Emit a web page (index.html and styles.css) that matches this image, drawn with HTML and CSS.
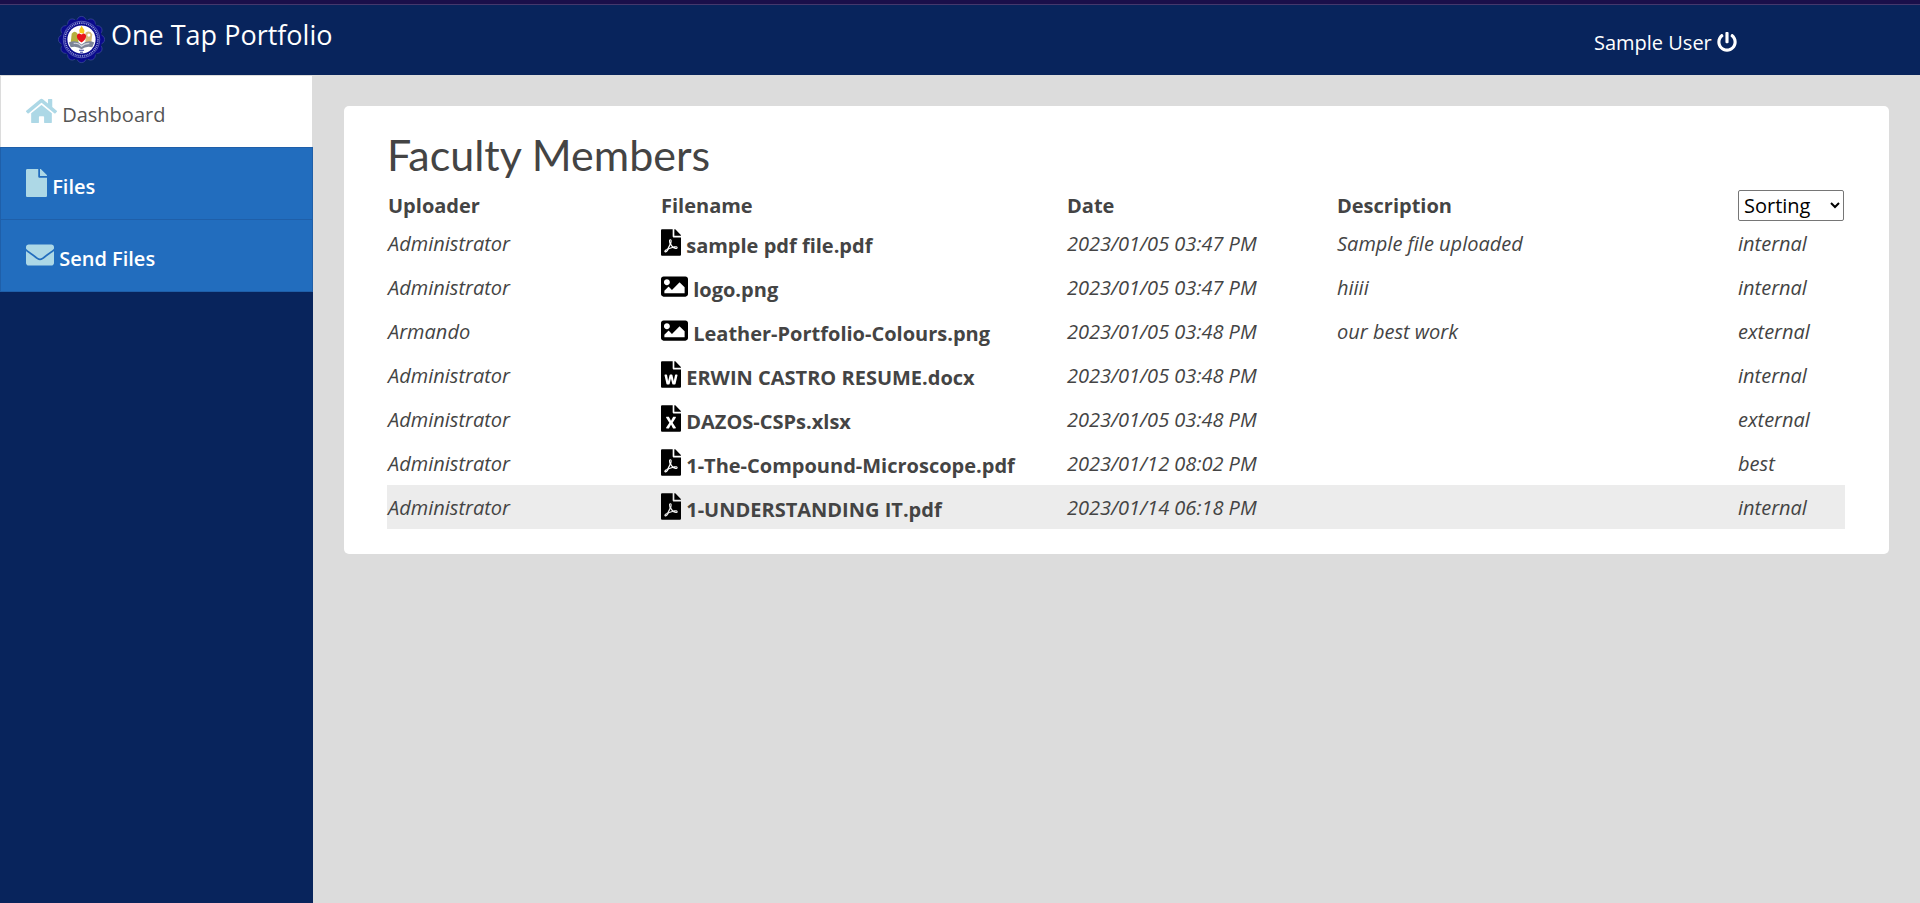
FILE: index.html
```html
<!DOCTYPE html>
<html lang="en">
<head>
<meta charset="utf-8">
<title>One Tap Portfolio</title>
<link rel="stylesheet" href="styles.css">
</head>
<body>
<svg class="sprite" aria-hidden="true">
  <symbol id="pdf" viewBox="0 0 384 512"><path d="M181.9 256.1c-5-16-4.9-46.9-2-46.9 8.4 0 7.6 36.9 2 46.9zm-1.7 47.2c-7.7 20.2-17.3 43.3-28.4 62.7 18.3-7 39-17.2 62.9-21.9-12.7-9.6-24.9-23.4-34.5-40.8zM86.1 428.1c0 .8 13.2-5.4 34.9-40.2-6.7 6.3-29.1 24.5-34.9 40.2zM248 160h136v328c0 13.3-10.7 24-24 24H24c-13.3 0-24-10.7-24-24V24C0 10.7 10.7 0 24 0h200v136c0 13.2 10.8 24 24 24zm-8 171.8c-20-12.2-33.3-29-42.7-53.8 4.5-18.5 11.6-46.6 6.2-64.2-4.7-29.4-42.4-26.5-47.8-6.8-5 18.3-.4 44.1 8.1 77-11.6 27.6-28.7 64.6-40.8 85.8-.1 0-.1.1-.2.1-27.1 13.9-73.6 44.5-54.5 68 5.6 6.9 16 10 21.5 10 17.9 0 35.7-18 61.1-61.8 25.8-8.5 54.1-19.1 79-23.2 21.7 11.8 47.1 19.5 64 19.5 29.2 0 31.2-32 19.7-43.4-13.9-13.6-54.3-9.7-73.6-7.2zM377 105L279 7c-4.5-4.5-10.6-7-17-7h-6v128h128v-6.1c0-6.3-2.5-12.4-7-16.9zm-74.1 255.3c4.1-2.7-2.5-11.9-42.8-9 37.1 15.8 42.8 9 42.8 9z"/></symbol>
  <symbol id="word" viewBox="0 0 384 512"><path d="M224 136V0H24C10.7 0 0 10.7 0 24v464c0 13.3 10.7 24 24 24h336c13.3 0 24-10.7 24-24V160H248c-13.2 0-24-10.8-24-24zm57.1 120H305c7.7 0 13.4 7.1 11.7 14.7l-38 168c-1.2 5.5-6.1 9.3-11.7 9.3h-38c-5.5 0-10.3-3.8-11.6-9.1-25.8-103.5-20.8-81.2-25.6-110.5h-.5c-1.1 14.3-2.4 17.4-25.6 110.5-1.3 5.3-6.1 9.1-11.6 9.1H117c-5.6 0-10.5-3.9-11.7-9.4l-37.8-168c-1.7-7.5 4-14.6 11.7-14.6h24.5c5.7 0 10.7 4 11.8 9.7 15.6 78 20.1 109.5 21 122.2 1.6-10.2 7.3-32.7 29.4-122.7 1.3-5.4 6.1-9.1 11.7-9.1h29.1c5.6 0 10.4 3.8 11.7 9.2 24 100.4 28.8 124 29.6 129.4-.2-11.2-2.6-17.8 21.6-129.2 1-5.6 5.9-9.5 11.5-9.5zM384 121.9v6.1H256V0h6.1c6.4 0 12.5 2.5 17 7l97.9 98c4.5 4.5 7 10.6 7 16.9z"/></symbol>
  <symbol id="excel" viewBox="0 0 384 512"><path d="M224 136V0H24C10.7 0 0 10.7 0 24v464c0 13.3 10.7 24 24 24h336c13.3 0 24-10.7 24-24V160H248c-13.2 0-24-10.8-24-24zm60.1 106.5L224 336l60.1 93.5c5.1 8-.6 18.5-10.1 18.5h-34.9c-4.4 0-8.5-2.4-10.6-6.3C208.9 405.5 192 373 192 373c-6.4 14.8-10 20-36.6 68.8-2.1 3.9-6.1 6.3-10.5 6.3H110c-9.5 0-15.2-10.5-10.1-18.5l60.3-93.5-60.3-93.5c-5.2-8 .6-18.5 10.1-18.5h34.8c4.4 0 8.5 2.4 10.6 6.3 26.1 48.8 20 33.6 36.6 68.5 0 0 6.1-11.7 36.6-68.5 2.1-3.9 6.2-6.3 10.6-6.3H274c9.5-.1 15.2 10.4 10.1 18.4zM384 121.9v6.1H256V0h6.1c6.4 0 12.5 2.5 17 7l97.9 98c4.5 4.5 7 10.6 7 16.9z"/></symbol>
  <symbol id="image" viewBox="0 0 512 512"><path d="M464 448H48c-26.51 0-48-21.49-48-48V112c0-26.51 21.49-48 48-48h416c26.51 0 48 21.49 48 48v288c0 26.51-21.49 48-48 48zM112 120c-30.928 0-56 25.072-56 56s25.072 56 56 56 56-25.072 56-56-25.072-56-56-56zM64 384h384V272l-87.515-87.515c-4.686-4.686-12.284-4.686-16.971 0L208 320l-55.515-55.515c-4.686-4.686-12.284-4.686-16.971 0L64 336v48z"/></symbol>
</svg>

<header class="topbar">
  <a class="brand" href="#">
    <svg class="seal" viewBox="0 0 48 48" aria-hidden="true">
      <g fill="#0a0a8c" stroke="#6d79bb" stroke-width="0.4">
        <circle cx="24" cy="5" r="4.6"/><circle cx="33.5" cy="7.6" r="4.6"/><circle cx="40.4" cy="14.5" r="4.6"/><circle cx="43" cy="24" r="4.6"/><circle cx="40.4" cy="33.5" r="4.6"/><circle cx="33.5" cy="40.4" r="4.6"/><circle cx="24" cy="43" r="4.6"/><circle cx="14.5" cy="40.4" r="4.6"/><circle cx="7.6" cy="33.5" r="4.6"/><circle cx="5" cy="24" r="4.6"/><circle cx="7.6" cy="14.5" r="4.6"/><circle cx="14.5" cy="7.6" r="4.6"/>
      </g>
      <circle cx="24" cy="24" r="21" fill="#0a0a8c"/>
      <circle cx="24" cy="24" r="18.6" fill="none" stroke="#8e96d8" stroke-width="0.6"/>
      <circle cx="24" cy="24" r="16.8" fill="none" stroke="#9aa0dc" stroke-width="1.8" stroke-dasharray="1 0.9"/>
      <circle cx="24" cy="24" r="14.4" fill="#fff"/>
      <path d="M14 18q3-4 6 0l1 9h-8z" fill="#b5b040"/>
      <path d="M28 17q5-3 7 2l-1 8h-6z" fill="#d5bd7a"/>
      <circle cx="31.5" cy="19.5" r="1.6" fill="#fff"/>
      <path d="M22 17q-1-3 1-5l1-2 2 3q2 2 0 5z" fill="#f8c81c"/>
      <path d="M11 27q8-3 13 2 6-5 13-2l-2 5q-6-2-11 2-5-4-11-2z" fill="#7c8498"/>
      <path d="M16 28q5-1 8 3 3-3 8-3" fill="none" stroke="#d4d7df" stroke-width="1.2"/>
      <path d="M24 27c-7-4-5-10-1.500-9q1 .3 1.500 1 .5-.7 1.500-1c3.500-1 5.500 5-1.500 9z" fill="#e8141c"/>
      <path d="M21.500 35h5M22.500 37h3" stroke="#3038a0"/>
    </svg>
    <span>One Tap Portfolio</span>
  </a>
  <a class="user" href="#">Sample User
    <svg class="power" viewBox="0 0 512 512" aria-hidden="true"><path d="M400 54.1c63 45 104 118.6 104 201.900 0 136.800-110.800 247.700-247.500 248C120 504.300 8.200 393 8 256.400 7.900 173.100 48.900 99.300 111.800 54.200c11.700-8.300 28-4.800 35 7.700L162.600 90c5.900 10.500 3.100 23.800-6.600 31-41.500 30.800-68 79.600-68 134.900-.1 92.300 74.500 168.100 168 168.100 91.600 0 168.600-74.200 168-169.100-.3-51.800-24.700-101.800-68.100-134-9.700-7.200-12.400-20.500-6.500-30.900l15.800-28.100c7-12.400 23.200-16.100 34.800-7.800zM296 264V24c0-13.300-10.700-24-24-24h-32c-13.300 0-24 10.700-24 24v240c0 13.300 10.700 24 24 24h32c13.300 0 24-10.700 24-24z"/></svg>
  </a>
</header>

<div class="layout">
  <nav class="sidebar">
    <a class="nav-item active" href="#"><svg class="nav-icon wide" viewBox="0 0 576 512" aria-hidden="true"><path d="M280.370 148.260L96 300.110V464a16 16 0 0 0 16 16l112.060-.29a16 16 0 0 0 15.920-16V368a16 16 0 0 1 16-16h64a16 16 0 0 1 16 16v95.640a16 16 0 0 0 16 16.050L464 480a16 16 0 0 0 16-16V300L295.670 148.260a12.190 12.190 0 0 0-15.300 0zM571.600 251.470L488 182.560V44.050a12 12 0 0 0-12-12h-56a12 12 0 0 0-12 12v72.610L318.470 43a48 48 0 0 0-61 0L4.340 251.470a12 12 0 0 0-1.600 16.900l25.500 31A12 12 0 0 0 45.150 301l235.220-193.740a12.190 12.190 0 0 1 15.300 0L530.900 301a12 12 0 0 0 16.900-1.600l25.500-31a12 12 0 0 0-1.700-16.930z"/></svg> Dashboard</a>
    <a class="nav-item" href="#"><svg class="nav-icon narrow" viewBox="0 0 384 512" aria-hidden="true"><path d="M224 136V0H24C10.700 0 0 10.700 0 24v464c0 13.300 10.700 24 24 24h336c13.300 0 24-10.700 24-24V160H248c-13.200 0-24-10.800-24-24zm160-14.100v6.100H256V0h6.100c6.400 0 12.500 2.500 17 7l97.900 98c4.500 4.500 7 10.600 7 16.900z"/></svg> Files</a>
    <a class="nav-item" href="#"><svg class="nav-icon" viewBox="0 0 512 512" aria-hidden="true"><path d="M502.300 190.800c3.900-3.100 9.700-.2 9.700 4.700V400c0 26.500-21.500 48-48 48H48c-26.500 0-48-21.500-48-48V195.600c0-5 5.700-7.800 9.700-4.700 22.400 17.400 52.100 39.500 154.100 113.600 21.100 15.400 56.700 47.800 92.200 47.600 35.700.3 72-32.800 92.300-47.600 102-74.100 131.600-96.300 154-113.700zM256 320c23.200.4 56.600-29.200 73.400-41.400 132.700-96.300 142.800-104.700 173.400-128.700 5.800-4.500 9.200-11.500 9.200-18.900v-19c0-26.500-21.500-48-48-48H48c-26.500 0-48 21.500-48 48v19c0 7.400 3.400 14.300 9.200 18.900 30.600 23.900 40.700 32.400 173.400 128.700 16.800 12.200 50.200 41.800 73.400 41.400z"/></svg> Send Files</a>
  </nav>
  <main class="content">
    <section class="card">
      <h1 class="title">Faculty Members</h1>
      <table class="files">
        <colgroup><col class="c-up"><col class="c-file"><col class="c-date"><col class="c-desc"><col class="c-sort"></colgroup>
        <thead>
          <tr><th>Uploader</th><th>Filename</th><th>Date</th><th>Description</th><th class="sort-cell"><select class="sort" aria-label="Sorting"><option>Sorting</option></select></th></tr>
        </thead>
        <tbody>
          <tr><td>Administrator</td><td class="name"><svg class="ficon"><use href="#pdf"/></svg> <b>sample pdf file.pdf</b></td><td>2023/01/05 03:47 PM</td><td>Sample file uploaded</td><td>internal</td></tr>
          <tr><td>Administrator</td><td class="name"><svg class="ficon pic"><use href="#image"/></svg> <b>logo.png</b></td><td>2023/01/05 03:47 PM</td><td>hiiii</td><td>internal</td></tr>
          <tr><td>Armando</td><td class="name"><svg class="ficon pic"><use href="#image"/></svg> <b>Leather-Portfolio-Colours.png</b></td><td>2023/01/05 03:48 PM</td><td>our best work</td><td>external</td></tr>
          <tr><td>Administrator</td><td class="name"><svg class="ficon"><use href="#word"/></svg> <b>ERWIN CASTRO RESUME.docx</b></td><td>2023/01/05 03:48 PM</td><td></td><td>internal</td></tr>
          <tr><td>Administrator</td><td class="name"><svg class="ficon"><use href="#excel"/></svg> <b>DAZOS-CSPs.xlsx</b></td><td>2023/01/05 03:48 PM</td><td></td><td>external</td></tr>
          <tr><td>Administrator</td><td class="name"><svg class="ficon"><use href="#pdf"/></svg> <b>1-The-Compound-Microscope.pdf</b></td><td>2023/01/12 08:02 PM</td><td></td><td>best</td></tr>
          <tr class="hovered"><td>Administrator</td><td class="name"><svg class="ficon"><use href="#pdf"/></svg> <b>1-UNDERSTANDING IT.pdf</b></td><td>2023/01/14 06:18 PM</td><td></td><td>internal</td></tr>
        </tbody>
      </table>
    </section>
  </main>
</div>
</body>
</html>
```
FILE: styles.css
```css
* { box-sizing: border-box; }

body {
  margin: 0;
  min-height: 100vh;
  display: flex;
  flex-direction: column;
  background: #dcdcdc;
  color: #444;
  font: 20px/30px "Open Sans", sans-serif;
}

a { color: inherit; text-decoration: none; }

.sprite { display: none; }

.topbar {
  display: flex;
  justify-content: space-between;
  border-top: 4px solid #1a0f4a;
  box-shadow: inset 0 1px #44386c;
  background: #08245c;
  color: #fff;
  height: 75px;
  padding: 11px 183px 0 58px;
}

.brand {
  display: flex;
  gap: 6px;
  font-size: 27px;
  line-height: 40px;
}

.seal { width: 47px; height: 49px; }

.user { padding-top: 13px; font-weight: 500; }

.power { width: 20px; height: 20px; fill: #fff; vertical-align: -2px; }

.layout { flex: 1; display: flex; }

.sidebar { flex: none; width: 313px; background: #08245c; }

.nav-item {
  display: block;
  height: 73px;
  padding: 21px 25px;
  border: 1px solid #1f5fa9;
  background: #226dbe;
  color: #fff;
  font-weight: 600;
}

.nav-item + .nav-item { margin-top: -1px; }

.nav-item.active {
  border-color: #dcdcdc;
  background: #fff;
  color: #555;
  font-weight: 500;
}

.nav-icon { width: 28px; height: 28px; fill: #add8e6; vertical-align: -3px; }
.nav-icon.wide { width: 31px; }
.nav-icon.narrow { width: 21px; }

.content { flex: 1; padding: 31px; }

.card {
  padding: 25px 44px 25px 43px;
  border-radius: 5px;
  background: #fff;
}

.title {
  margin: 0 0 10px;
  font: 400 43px/48px Lato, sans-serif;
}

.files {
  width: 100%;
  table-layout: fixed;
  border-collapse: collapse;
}

.c-up { width: 273px; }
.c-file { width: 406px; }
.c-date { width: 270px; }
.c-sort { width: 108px; }

.files th, .files td { padding: 1px 1px 0; text-align: left; }
.files th { height: 32px; }
.files .sort-cell { padding-top: 0; }
.files td { height: 44px; font-style: italic; }
.files .name { font-style: normal; padding-top: 4px; }
.hovered { background: #ececec; }

.ficon { width: 20px; height: 27px; fill: #000; vertical-align: -3px; }
.ficon.pic { width: 27px; }

.sort {
  display: block;
  width: 106px;
  height: 31px;
  padding: 0 0 0 1px;
  border: 1px solid #767676;
  border-radius: 2px;
  background: #fff;
  color: #000;
  font: 20px "Open Sans", sans-serif;
}
```
